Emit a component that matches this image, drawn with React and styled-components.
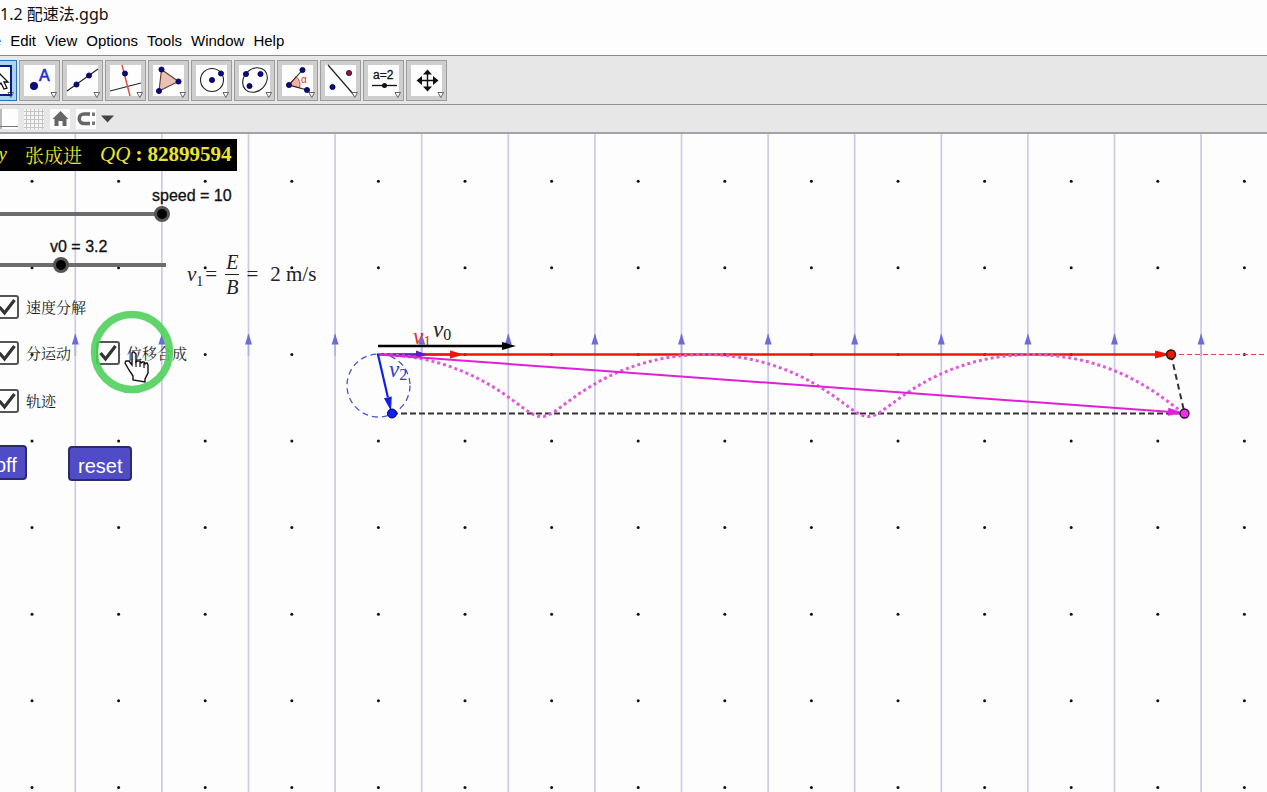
import React, { useState } from "react";
import styled, { createGlobalStyle } from "styled-components";

const theme = {
  ui: '"Liberation Sans", Arial, sans-serif',
  title: '"Noto Sans", "Noto Sans CJK SC", sans-serif',
  math: '"Liberation Serif", "Noto Serif CJK SC", "Noto Sans CJK SC", serif',
  navy: "#0a0a82",
  blue: "#1020e8",
  field: "#6b6bdc",
  magenta: "#e020d8",
};

//----------------------------------------------------------------
const GlobalStyle = createGlobalStyle`
  * {
    box-sizing: border-box;
  }
  body {
    margin: 0;
    background-color: #fdfdfd;
    overflow: hidden;
  }
`;
//----------------------------------------------------------------
const Window = styled.div`
  display: flex;
  flex-direction: column;
  height: 100vh;
  overflow: hidden;
  color: #111;
  font-family: ${theme.ui};
`;
const TitleBar = styled.header`
  height: 29px;
  font-family: ${theme.title};
  font-size: 16px;
  line-height: 28px;
  white-space: nowrap;
`;
//----------------------------------------------------------------
const MenuBar = styled.nav`
  display: flex;
  gap: 1px;
  height: 26px;
  margin-left: -27px;
`;
const MenuItem = styled.button`
  border: 0;
  padding: 0 4px 3px;
  background: none;
  color: #000;
  font-family: inherit;
  font-size: 15px;
`;
//----------------------------------------------------------------
const ToolBar = styled.div`
  display: flex;
  align-items: center;
  gap: 2px;
  height: 50px;
  margin-left: -24px;
  border-top: 1px solid #8a8a8a;
  border-bottom: 1px solid #8f8f8f;
  background-color: #e7e7e7;
`;
const ToolButton = styled.button`
  display: flex;
  width: 41px;
  height: 41px;
  padding: 4px;
  border: 1px solid ${(props) => (props.$active ? "#2a6fb0" : "#9c9c9c")};
  background-color: ${(props) => (props.$active ? "#a9d3f7" : "#cecece")};
  svg {
    width: 31px;
    height: 31px;
    background-color: #fdfdfd;
    outline: ${(props) => (props.$active ? "2px solid #0a1a8c" : "none")};
    outline-offset: -2px;
  }
`;
//----------------------------------------------------------------
const StyleBar = styled.div`
  display: flex;
  align-items: center;
  gap: 6px;
  height: 29px;
  margin-left: -2px;
  border-bottom: 2px solid #a2a2a8;
  background-color: #e7e7e7;
`;
const StyleButton = styled.button`
  display: flex;
  padding: 0;
  border: 0;
  background: none;
  svg {
    width: ${(props) => props.$width || 20}px;
    height: 20px;
  }
`;
//----------------------------------------------------------------
const Sheet = styled.main`
  position: relative;
  flex: 1;
  overflow: hidden;
`;
const Drawing = styled.svg`
  position: absolute;
  inset: 0;
  width: 100%;
  height: 100%;
  font-family: ${theme.math};
`;
// objects pinned to a spot on the graphics view
const Pinned = styled.div`
  position: absolute;
  left: ${(props) => props.$x}px;
  top: ${(props) => props.$y}px;
  white-space: nowrap;
`;
//----------------------------------------------------------------
const Credit = styled(Pinned)`
  display: flex;
  gap: 18px;
  align-items: center;
  height: 32px;
  padding: 0 6px 2px;
  background-color: #000;
  color: #e9e52e;
  font-family: ${theme.math};
  font-size: 19px;
`;
const CreditNumber = styled.span`
  display: flex;
  gap: 5px;
  font-size: 21px;
`;
//----------------------------------------------------------------
const SliderLabel = styled.label`
  display: block;
  padding-left: ${(props) => props.$indent}px;
  font-size: 16px;
  line-height: 18px;
  -webkit-text-stroke: 0.3px #111;
`;
const SliderInput = styled.input`
  appearance: none;
  display: block;
  width: ${(props) => props.$width}px;
  height: 16px;
  margin: 1px 0 0;
  background: linear-gradient(#6c6c6c, #6c6c6c) center / calc(100% - 16px) 4px
    no-repeat;
  &::-webkit-slider-thumb {
    appearance: none;
    width: 16px;
    height: 16px;
    border: 3px solid #555;
    border-radius: 50%;
    background-color: #000;
  }
`;
//----------------------------------------------------------------
const CheckLabel = styled.label`
  display: flex;
  align-items: center;
  gap: 7px;
  font-family: ${theme.math};
  font-size: 15px;
  color: #222;
`;
const CheckText = styled.span`
  padding-top: 2px;
  line-height: 24px;
`;
const CheckBox = styled.span`
  display: grid;
  width: 24px;
  height: 24px;
  > * {
    grid-area: 1 / 1;
    width: 24px;
    height: 24px;
    margin: 0;
  }
  input {
    appearance: none;
    border: 2px solid #555;
    border-radius: 3px;
    background-color: #fdfdfd;
  }
  svg {
    pointer-events: none;
  }
`;
//----------------------------------------------------------------
const PushButton = styled.button`
  height: 35px;
  padding: 6px 8px 0;
  border: 2px solid #2b2a6b;
  border-radius: 4px;
  background-color: #504cc6;
  color: #fff;
  font-family: ${theme.ui};
  font-size: 20px;
`;
//----------------------------------------------------------------
const Formula = styled(Pinned)`
  display: flex;
  align-items: center;
  gap: 8px;
  font-family: ${theme.math};
  font-size: 21px;
  color: #222;
  sub {
    margin-right: 2px;
    font-size: 14px;
    line-height: 0;
  }
`;
const Fraction = styled.span`
  display: flex;
  flex-direction: column;
  align-items: center;
  font-size: 20px;
  font-style: italic;
  line-height: 24px;
  span:first-child {
    padding: 0 1px;
    border-bottom: 1px solid #222;
  }
`;
const Equals = styled.span`
  display: flex;
  gap: 12px;
  margin-left: -1px;
`;
//----------------------------------------------------------------
const Pointer = styled(Pinned)`
  width: 82px;
  height: 82px;
  pointer-events: none;
  svg {
    overflow: visible;
  }
`;

const Dot = ({ x, y, r = 2.6, fill = theme.navy }) => (
  <circle cx={x} cy={y} r={r} fill={fill} stroke="#000050" strokeWidth=".8" />
);

const tools = [
  {
    name: "Move",
    icon: <path d="M17 7v14l3-3 3 6 3-1-3-6h4z" fill="#fff" stroke="#111" strokeWidth="1.3" />,
  },
  {
    name: "Point",
    icon: (
      <>
        <Dot x={10} y={21} r={3.7} />
        <text x="15" y="16" fontSize="16" fill="#1c2bd8" stroke="#1c2bd8" strokeWidth=".6">
          A
        </text>
      </>
    ),
  },
  {
    name: "Line",
    icon: (
      <>
        <path d="M0 26L31 4" stroke="#222" strokeWidth="1.1" />
        <Dot x={9.5} y={19.5} />
        <Dot x={22} y={10.5} />
      </>
    ),
  },
  {
    name: "Perpendicular Line",
    icon: (
      <>
        <path d="M0 26L31 18" stroke="#222" strokeWidth="1.1" />
        <path d="M12 0L20 31" stroke="#d84a40" strokeWidth="1.4" />
        <Dot x={15} y={8.5} />
      </>
    ),
  },
  {
    name: "Polygon",
    icon: (
      <>
        <path d="M8.500 4.500L25.500 16.500L6 26z" fill="#e6c3b4" stroke="#6b3a2c" strokeWidth="1.1" />
        <Dot x={8.5} y={4.5} />
        <Dot x={25.5} y={16.5} />
        <Dot x={6} y={26} />
      </>
    ),
  },
  {
    name: "Circle with Center",
    icon: (
      <>
        <circle cx="16" cy="15" r="11.500" fill="none" stroke="#222" strokeWidth="1.1" />
        <Dot x={16} y={15} />
        <Dot x={25} y={8.5} />
      </>
    ),
  },
  {
    name: "Ellipse",
    icon: (
      <>
        <ellipse
          cx="16"
          cy="15"
          rx="13.500"
          ry="11"
          transform="rotate(-45 16 15)"
          fill="none"
          stroke="#222"
          strokeWidth="1.1"
        />
        <Dot x={7} y={9} />
        <Dot x={21.5} y={9} />
        <Dot x={10.5} y={21} />
      </>
    ),
  },
  {
    name: "Angle",
    icon: (
      <>
        <path d="M7 20L14 11.500A11 11 0 0 1 17.500 23z" fill="#f5b0a4" stroke="#d84a40" />
        <path d="M20.500 5L7 20L25 25" fill="none" stroke="#222" strokeWidth="1.1" />
        <text x="19" y="18" fontSize="10" fill="#d8382c">
          α
        </text>
        <Dot x={20.5} y={5} />
        <Dot x={7} y={20} />
        <Dot x={25} y={25} />
      </>
    ),
  },
  {
    name: "Reflect about Line",
    icon: (
      <>
        <path d="M3 0L29 30" stroke="#222" strokeWidth="1.2" />
        <Dot x={7.5} y={22} />
        <Dot x={24} y={8} fill="#a01224" />
      </>
    ),
  },
  {
    name: "Slider",
    icon: (
      <>
        <text x="5" y="14" fontSize="12" fill="#111" stroke="#111" strokeWidth=".3">
          a=2
        </text>
        <path d="M4 20.500h25" stroke="#111" strokeWidth="1.3" />
        <circle cx="16.500" cy="20.500" r="2.500" fill="#111" />
      </>
    ),
  },
  {
    name: "Move Graphics View",
    icon: (
      <>
        <path d="M16.500 7v18M7 15.500h18" stroke="#111" strokeWidth="1.4" />
        <path
          d="M16.500 4.500l4.500 5h-9zM16.500 26.500l4.500-5h-9zM5.500 15.500l5.500-4.500v9zM27.500 15.500l-5.500-4.500v9z"
          fill="#111"
        />
      </>
    ),
  },
];

const menus = ["File", "Edit", "View", "Options", "Tools", "Window", "Help"];

const STEP = 86.6;
const ORIGIN = { x: 378, y: 220.5 };
const RADIUS = 31;
const columns = Array.from({ length: 30 }, (_, i) => i);
const rows = Array.from({ length: 16 }, (_, i) => i);

// cycloid traced by a point on the circle while its centre drifts right
const cycloid = () => {
  const points = [];
  for (let t = 0; t <= 15.26; t += 0.04) {
    const x = ORIGIN.x + 52 * t + RADIUS * Math.sin(t);
    const y = ORIGIN.y + RADIUS - RADIUS * Math.cos(t);
    points.push(`${x.toFixed(1)},${y.toFixed(1)}`);
  }
  return points.join(" ");
};

const Vector = ({ x1, y1, x2, y2, color, width = 2, head = 14 }) => {
  const angle = (Math.atan2(y2 - y1, x2 - x1) * 180) / Math.PI;
  const length = Math.hypot(x2 - x1, y2 - y1);
  return (
    <g transform={`translate(${x1} ${y1}) rotate(${angle})`}>
      <path d={`M0 0H${length - head}`} stroke={color} strokeWidth={width} />
      <path d={`M${length} 0l${-head} -4v8z`} fill={color} />
    </g>
  );
};

const FieldPlot = () => (
  <Drawing aria-label="velocity field">
    {columns.map((i) => {
      const x = 75.3 + i * STEP;
      return (
        <g key={i}>
          <path d={`M${x} 0V2000`} stroke="#cbcae8" strokeWidth="1.700" />
          <path d={`M${x} 200v22`} stroke="#b4b3e6" strokeWidth="1.700" />
          <path d={`M${x} 199.500l3.500 11h-7z`} fill={theme.field} />
        </g>
      );
    })}
    {rows.map((r) =>
      columns.map((c) => (
        <circle key={`${r}-${c}`} cx={32 + c * STEP} cy={47.2 + r * STEP} r="1.500" fill="#111" />
      ))
    )}
    <circle
      cx="378.500"
      cy="251.500"
      r="31.500"
      fill="none"
      stroke="#4a55d0"
      strokeWidth="1.300"
      strokeDasharray="6 4"
    />
    <path d="M392 279.500H1184" stroke="#333" strokeWidth="2" strokeDasharray="6 3" />
    <path d="M1171 220.500L1184.500 279" stroke="#333" strokeWidth="2" strokeDasharray="6 4" />
    <path d="M1171 220.500H2600" stroke="#e04848" strokeWidth="1.200" strokeDasharray="5 3" />
    <Vector x1={378} y1={220.5} x2={1171} y2={220.5} color="#f01408" width={2.4} head={16} />
    <Vector x1={378} y1={220.5} x2={464} y2={220.5} color="#f01408" width={2} />
    <Vector x1={378} y1={220.5} x2={427} y2={220.5} color="#5a20b8" width={1.6} head={11} />
    <polyline
      points={cycloid()}
      fill="none"
      stroke="#e05ad8"
      strokeWidth="3"
      strokeDasharray="3 3"
    />
    <Vector x1={378} y1={220.5} x2={1184} y2={279} color={theme.magenta} head={16} />
    <Vector x1={378} y1={220.5} x2={391} y2={277} color={theme.blue} width={2.2} />
    <g fontSize="23" fontStyle="italic">
      <text x="433" y="203" fill="#222">
        v<tspan dy="3" fontSize="16" fontStyle="normal">0</tspan>
      </text>
      <text x="413" y="210" fill="#e03028">
        v<tspan dy="3" fontSize="16" fontStyle="normal">1</tspan>
      </text>
      <text x="389" y="243" fill="#3038d8">
        v<tspan dy="3" fontSize="16" fontStyle="normal">2</tspan>
      </text>
    </g>
    <Vector x1={378} y1={212} x2={516} y2={212} color="#000" width={2.4} />
    <circle cx="392" cy="279.500" r="4.500" fill="#1020f0" stroke="#000060" />
    <circle cx="1171" cy="220.500" r="4.500" fill="#f01408" stroke="#300" strokeWidth="1.300" />
    <circle cx="1184.500" cy="279.500" r="4.500" fill="#f030e8" stroke="#303" strokeWidth="1.300" />
  </Drawing>
);

const Slider = ({ x, y, id, label, indent, width, max, value, onChange }) => (
  <Pinned $x={x} $y={y}>
    <SliderLabel htmlFor={id} $indent={indent}>
      {label} = {value}
    </SliderLabel>
    <SliderInput
      type="range"
      id={id}
      min="0"
      max={max}
      step="0.1"
      $width={width}
      value={value}
      onChange={(e) => onChange(Number(e.target.value))}
    />
  </Pinned>
);

const Check = ({ x, y, label }) => {
  const [checked, setChecked] = useState(true);
  return (
    <Pinned $x={x} $y={y}>
      <CheckLabel>
        <CheckBox>
          <input
            type="checkbox"
            checked={checked}
            onChange={(e) => setChecked(e.target.checked)}
          />
          {checked && (
            <svg viewBox="0 0 24 24">
              <path d="M4.500 12l5 6L19.500 5" fill="none" stroke="#333" strokeWidth="3.200" />
            </svg>
          )}
        </CheckBox>
        <CheckText>{label}</CheckText>
      </CheckLabel>
    </Pinned>
  );
};

const App = () => {
  const [speed, setSpeed] = useState(10);
  const [v0, setV0] = useState(3.2);

  return (
    <Window>
      <GlobalStyle />
      <TitleBar>1.2 配速法.ggb</TitleBar>
      <MenuBar>
        {menus.map((menu) => (
          <MenuItem key={menu}>{menu}</MenuItem>
        ))}
      </MenuBar>
      <ToolBar>
        {tools.map(({ name, icon }, i) => (
          <ToolButton key={name} aria-label={name} $active={i === 0}>
            <svg viewBox="0 0 31 31" overflow="visible">
              {icon}
              <path d="M27 27.500h5.500l-2.700 5z" fill="#fff" stroke="#555" strokeWidth=".9" />
            </svg>
          </ToolButton>
        ))}
      </ToolBar>
      <StyleBar>
        <StyleButton aria-label="Axes">
          <svg viewBox="0 0 20 20">
            <path d="M0 0h20v20H0z" fill="#fdfdfd" />
            <path d="M3 0v20M0 17.500h20" stroke="#777" />
          </svg>
        </StyleButton>
        <StyleButton aria-label="Grid">
          <svg viewBox="0 0 20 20">
            <path d="M0 0h20v20H0z" fill="#f6f6f6" />
            <path
              d="M2.500 0v20M6.500 0v20M10.500 0v20M14.500 0v20M18.500 0v20M0 2.500h20M0 6.500h20M0 10.500h20M0 14.500h20M0 18.500h20"
              stroke="#c4c4c4"
            />
          </svg>
        </StyleButton>
        <StyleButton aria-label="Standard View">
          <svg viewBox="0 0 20 20">
            <path d="M0 0h20v20H0z" fill="#fdfdfd" />
            <path d="M10.500 2l8 8h-2v7h-4v-5h-4v5h-4v-7h-2z" fill="#666" />
          </svg>
        </StyleButton>
        <StyleButton aria-label="Point Capturing" $width={38}>
          <svg viewBox="0 0 38 20">
            <path d="M0 0h20v20H0z" fill="#fdfdfd" />
            <path d="M14 5H8a4.500 4.500 0 0 0 0 9.500H14" fill="none" stroke="#666" strokeWidth="3.600" />
            <path d="M16 3.500h3v3.500h-3zM16 12.500h3v3.500h-3z" fill="#777" />
            <path d="M25 6.500h13l-6.500 7z" fill="#444" />
          </svg>
        </StyleButton>
      </StyleBar>
      <Sheet>
        <FieldPlot />
        <Credit $x={-19} $y={5}>
          <i>By</i>
          <span>张成进</span>
          <CreditNumber>
            <i>QQ</i>
            <b>:</b>
            <b>82899594</b>
          </CreditNumber>
        </Credit>
        <Slider
          x={-133}
          y={53}
          id="speed"
          label="speed"
          indent={285}
          width={303}
          max={10}
          value={speed}
          onChange={setSpeed}
        />
        <Slider
          x={-133}
          y={104}
          id="v0"
          label="v0"
          indent={183}
          width={307}
          max={5}
          value={v0}
          onChange={setV0}
        />
        <Formula $x={187} $y={116}>
          <span>
            <i>v</i>
            <sub>1</sub>=
          </span>
          <Fraction>
            <span>E</span>
            <span>B</span>
          </Fraction>
          <Equals>
            <span>=</span>
            <span>2 m/s</span>
          </Equals>
        </Formula>
        <Check x={-5} y={160} label="速度分解" />
        <Check x={-5} y={206} label="分运动" />
        <Check x={96} y={206} label="位移合成" />
        <Check x={-5} y={254} label="轨迹" />
        <Pinned $x={-15} $y={311}>
          <PushButton>off</PushButton>
        </Pinned>
        <Pinned $x={68} $y={312}>
          <PushButton>reset</PushButton>
        </Pinned>
        <Pointer $x={91} $y={177}>
          <svg viewBox="0 0 82 82">
            <circle
              cx="41"
              cy="41"
              r="37.500"
              fill="none"
              stroke="#4fd05c"
              strokeOpacity=".9"
              strokeWidth="7.500"
            />
            <path
              d="M42 69v-4l-4-6-4-7 1-2h3l3 4V42l1-1h1l2 2v8l1-1h3l1 2 1-1h2l1 2 1-1h1l1 2v8l-3 6v3z"
              fill="#fff"
              fillOpacity=".85"
              stroke="#111"
              strokeWidth="1.400"
            />
            <path d="M45 50v6M49 51v5M53 52v5" stroke="#111" strokeWidth="1.200" />
          </svg>
        </Pointer>
      </Sheet>
    </Window>
  );
};
export default App;
